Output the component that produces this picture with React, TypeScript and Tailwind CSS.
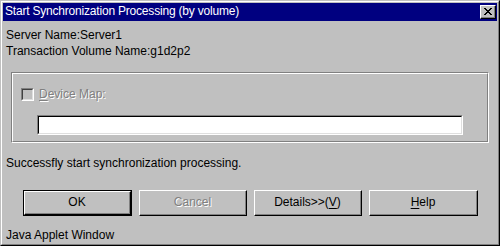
import type { ReactNode } from 'react';

const font = { fontFamily: '"Liberation Sans", Arial, sans-serif' };

function Raised({ children, isDefault, className = '' }: { children: ReactNode; isDefault?: boolean; className?: string }) {
  const inner = (
    <div className="flex-1 flex border-t border-l border-t-white border-l-white border-r border-b border-r-black border-b-black">
      <div className="flex-1 flex items-center justify-center border-r border-b border-r-[#808080] border-b-[#808080]">{children}</div>
    </div>
  );
  return isDefault ? (
    <div className={`flex border border-black ${className}`}>{inner}</div>
  ) : (
    <div className={`flex ${className}`}>{inner}</div>
  );
}

function Disabled({ children }: { children: ReactNode }) {
  return <span className="text-[#808080] [text-shadow:1px_1px_0_#ffffff]">{children}</span>;
}

export default function App() {
  return (
    <div className="w-[500px] h-[246px] text-[12px] leading-[15px] text-black" style={font}>
      <div className="w-full h-full flex border border-t-[#c0c0c0] border-l-[#c0c0c0] border-r-black border-b-black">
        <div className="flex-1 flex border border-t-white border-l-white border-r-[#808080] border-b-[#808080]">
          <div className="flex-1 flex flex-col bg-[#c0c0c0] p-px">
            {/* title bar */}
            <div className="h-[18px] bg-[#000080] flex items-center justify-between pl-[2px] pr-[1px]">
              <span className="text-white tracking-[-0.2px]">Start Synchronization Processing (by volume)</span>
              <Raised className="w-[16px] h-[14px] bg-[#c0c0c0]">
                <svg width="8" height="7" viewBox="0 0 8 7" shapeRendering="crispEdges">
                  <path d="M0 0h2v1h-2zM6 0h2v1h-2zM1 1h2v1h-2zM5 1h2v1h-2zM2 2h4v1h-4zM3 3h2v1h-2zM2 4h4v1h-4zM1 5h2v1h-2zM5 5h2v1h-2zM0 6h2v1h-2zM6 6h2v1h-2z" fill="black" />
                </svg>
              </Raised>
            </div>

            <div className="pl-[3px] mt-[6px] leading-[16px]">
              <div>Server Name:Server1</div>
              <div>Transaction Volume Name:g1d2p2</div>
            </div>

            {/* group box */}
            <div className="ml-[8px] mr-[8px] mt-[13px] h-[73px] flex border border-t-[#808080] border-l-[#808080] border-r-white border-b-white">
              <div className="flex-1 flex flex-col border border-t-white border-l-white border-r-[#808080] border-b-[#808080] pl-[8px] pt-[14px]">
                <div className="flex items-center h-[13px]">
                  <div className="w-[13px] h-[13px] flex border border-t-[#808080] border-l-[#808080] border-r-white border-b-white">
                    <div className="flex-1 border border-t-[#404040] border-l-[#404040] border-r-[#dfdfdf] border-b-[#dfdfdf] bg-[#c0c0c0]" />
                  </div>
                  <span className="ml-[5px]">
                    <Disabled><span className="underline underline-offset-2">D</span>evice Map:</Disabled>
                  </span>
                </div>
                <div className="ml-[16px] mt-[14px] w-[426px] h-[20px] flex border border-t-[#808080] border-l-[#808080] border-r-white border-b-white">
                  <div className="flex-1 bg-white border border-t-black border-l-black border-r-[#dfdfdf] border-b-[#dfdfdf]" />
                </div>
              </div>
            </div>

            <div className="pl-[3px] mt-[13px]">Successfly start synchronization processing.</div>

            {/* buttons */}
            <div className="flex gap-[7px] pl-[20px] mt-[19px] h-[27px]">
              <Raised isDefault className="w-[109px]">OK</Raised>
              <Raised className="w-[108px]"><Disabled>Cancel</Disabled></Raised>
              <Raised className="w-[108px]">
                <span>Details&gt;&gt;(<span className="underline underline-offset-2">V</span>)</span>
              </Raised>
              <Raised className="w-[109px]">
                <span><span className="underline underline-offset-2">H</span>elp</span>
              </Raised>
            </div>

            <div className="pl-[3px] mt-[12px]">Java Applet Window</div>
          </div>
        </div>
      </div>
    </div>
  );
}
